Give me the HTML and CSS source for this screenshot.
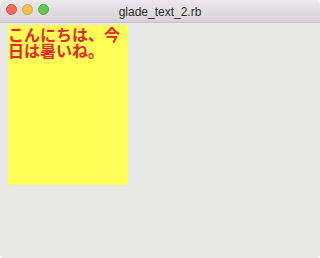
FILE: index.html
```html
<!DOCTYPE html>
<html>
<head>
	<meta charset="utf-8">
	<title>glade_text_2.rb</title>
	<link rel="stylesheet" href="styles.css">
</head>
<body>

<div class="window">
	<div class="titlebar">
		<div class="lights">
			<span class="light light-close"></span>
			<span class="light light-min"></span>
			<span class="light light-max"></span>
		</div>
		<div class="title">glade_text_2.rb</div>
	</div>

	<div class="content">
		<div class="label">こんにちは、今日は暑いね。</div>
	</div>
</div>

</body>
</html>
```

FILE: styles.css
```css
body {
	margin: 0;
	background: white;
	font-family: "Liberation Sans", "DejaVu Sans", sans-serif;
}
.window {
	width: 320px;
	height: 258px;
	background: #e8e8e7;
	border-radius: 5px 5px 4px 4px;
	overflow: hidden;
	display: flex;
	flex-direction: column;
}

.titlebar {
	height: 22px;
	flex: none;
	position: relative;
	display: flex;
	align-items: center;
	justify-content: center;
	background: linear-gradient(#ebe9eb, #d5d3d5);
	border-bottom: 1px solid #c4c2c4;
}
.lights {
	position: absolute;
	left: 6px;
	top: 4px;
	display: flex;
	gap: 5px;
}
.light {
	width: 11px;
	height: 11px;
	border-radius: 50%;
	box-sizing: border-box;
}
.light-close { background: #ee6a5f; border: 0.5px solid #d8574c; }
.light-min { background: #f6bf4f; border: 0.5px solid #dca23b; }
.light-max { background: #62c655; border: 0.5px solid #4ead41; }

.title {
	font-size: 12px;
	color: #2a2a2a;
	padding-top: 1px;
}

/* --------------- */

.content {
	flex: 1;
	padding: 2px 8px;
}
.label {
	width: 120px;
	height: 160px;
	background: #ffff55;
	color: #e6262a;
	font-family: "Noto Sans CJK JP", sans-serif;
	font-weight: bold;
	font-size: 16px;
	line-height: 16px;
	padding-top: 1px;
	box-sizing: border-box;
}
```
